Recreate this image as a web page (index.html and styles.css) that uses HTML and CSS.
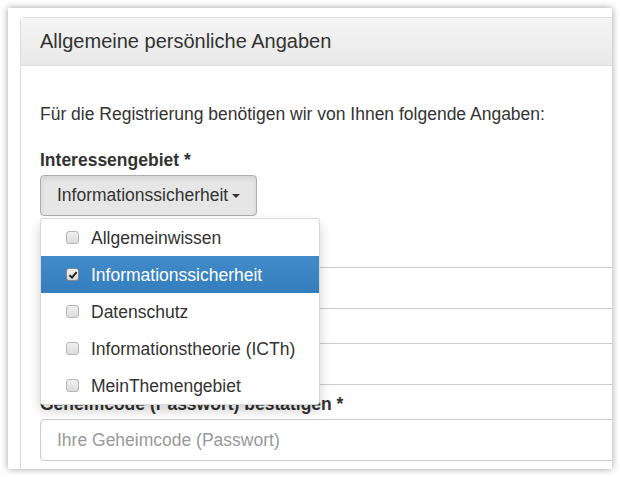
FILE: index.html
```html
<!DOCTYPE html>
<html lang="de">
<head>
<meta charset="utf-8">
<title>Registrierung</title>
<link rel="stylesheet" href="styles.css">
</head>
<body>
<div class="frame">
  <div class="panel">
    <div class="panel-heading">
      <h3 class="panel-title">Allgemeine persönliche Angaben</h3>
    </div>
    <div class="panel-body">
      <p class="intro">Für die Registrierung benötigen wir von Ihnen folgende Angaben:</p>

      <div class="form-group form-group-first">
        <label class="label">Interessengebiet *</label>
        <div class="dropdown">
          <button class="btn" type="button">Informationssicherheit <span class="caret"></span></button>
          <ul class="dropdown-menu">
            <li class="item"><span class="check"></span>Allgemeinwissen</li>
            <li class="item active"><span class="check checked"><svg viewBox="0 0 10 10" width="10" height="10"><path d="M1.5 5.2 L4 7.6 L8.6 2.2" fill="none" stroke="#222" stroke-width="2"/></svg></span>Informationssicherheit</li>
            <li class="item"><span class="check"></span>Datenschutz</li>
            <li class="item"><span class="check"></span>Informationstheorie (ICTh)</li>
            <li class="item"><span class="check"></span>MeinThemengebiet</li>
          </ul>
        </div>
      </div>

      <div class="form-group">
        <label class="label">E-Mail *</label>
        <input class="input" type="text" placeholder="Ihre E-Mail">
      </div>

      <div class="form-group">
        <label class="label">Geheimcode *</label>
        <input class="input" type="password" placeholder="Ihr Geheimcode">
      </div>

      <div class="form-group">
        <label class="label">Geheimcode (Passwort) bestätigen *</label>
        <input class="input" type="password" placeholder="Ihre Geheimcode (Passwort)">
      </div>
    </div>
  </div>
</div>
</body>
</html>
```

FILE: styles.css
```css
* { box-sizing: border-box; }

html, body {
  margin: 0;
  padding: 0;
  background: #fff;
}

body {
  font-family: "Liberation Sans", Arial, sans-serif;
  color: #333;
  font-size: 17.5px;
}

.frame {
  margin: 8px;
  width: 604px;
  height: 461px;
  overflow: hidden;
  background: #fff;
  box-shadow: 0 0 7px rgba(0, 0, 0, 0.38);
  padding: 9px 0 0 12px;
}

.panel {
  width: 720px;
  height: 480px;
  border: 1px solid #ddd;
  border-radius: 4px 4px 0 0;
  background: #fff;
}

.panel-heading {
  height: 48px;
  border-bottom: 1px solid #ddd;
  background: linear-gradient(to bottom, #f5f5f5, #e8e8e8);
  border-radius: 3px 3px 0 0;
  padding: 0 19px;
  display: flex;
  align-items: center;
}

.panel-title {
  margin: 0;
  font-size: 20px;
  font-weight: normal;
  color: #333;
}

.panel-body {
  padding: 37px 19px 0;
}

.intro {
  margin: 0 0 24px;
  line-height: 22px;
}

.form-group {
  margin-bottom: 8px;
}

.form-group-first {
  margin-bottom: 25px;
}

.label {
  display: block;
  font-weight: bold;
  line-height: 22px;
  margin-bottom: 4px;
}

.dropdown {
  position: relative;
  display: inline-block;
}

.btn {
  font-family: inherit;
  font-size: 17.5px;
  color: #333;
  line-height: 21px;
  padding: 9px 16px;
  height: 41px;
  border: 1px solid #adadad;
  border-radius: 4px;
  background: #e6e6e6;
  box-shadow: inset 0 3px 5px rgba(0, 0, 0, 0.08);
  display: flex;
  align-items: center;
  gap: 4px;
}

.caret {
  display: inline-block;
  width: 0;
  height: 0;
  border-top: 4px solid #333;
  border-left: 4px solid transparent;
  border-right: 4px solid transparent;
  margin-top: 1px;
}

.dropdown-menu {
  position: absolute;
  top: 43px;
  left: 0;
  width: 280px;
  margin: 0;
  padding: 0;
  list-style: none;
  background: #fff;
  border: 1px solid rgba(0, 0, 0, 0.15);
  border-radius: 4px;
  box-shadow: 0 6px 12px rgba(0, 0, 0, 0.175);
  z-index: 10;
}

.item {
  height: 37px;
  display: flex;
  align-items: center;
  padding-left: 25px;
  color: #333;
  line-height: 22px;
}

.item.active {
  background: linear-gradient(to bottom, #428bca, #357ebd);
  color: #fff;
}

.check {
  width: 13px;
  height: 13px;
  margin-right: 12px;
  border: 1px solid #b5b5b5;
  border-radius: 3px;
  background: linear-gradient(to bottom, #f0f0f0, #dcdcdc);
  display: flex;
  align-items: center;
  justify-content: center;
  flex: none;
}

.check.checked {
  background: linear-gradient(to bottom, #f2f2f2, #d8d8d8);
  border-color: #8a8a8a;
}

.input {
  display: block;
  width: 100%;
  height: 42px;
  padding: 8px 16px;
  font-family: inherit;
  font-size: 17.5px;
  color: #555;
  border: 1px solid #ccc;
  border-radius: 4px;
  background: #fff;
}

.input::placeholder {
  color: #999;
}
```
